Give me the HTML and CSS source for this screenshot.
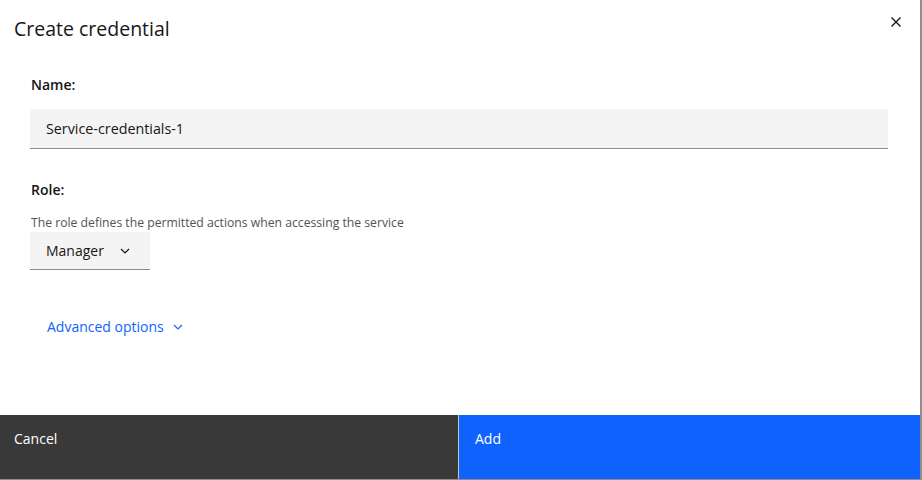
FILE: index.html
```html
<!DOCTYPE html>
<html>
<head>
  <title>Create credential</title>
  <link rel="stylesheet" href="styles.css">
</head>
<body>

  <div class="modal">
    <div class="header">
      <h2>Create credential</h2>
      <button class="close" aria-label="Close">
        <svg width="16" height="16" viewBox="0 0 16 16"><path d="M3.5 3.5 L12.5 12.5 M12.5 3.5 L3.5 12.5" stroke="#161616" stroke-width="1.4" fill="none"/></svg>
      </button>
    </div>

    <div class="content">
      <div class="field">
        <label class="label">Name:</label>
        <input class="text-input" type="text" value="Service-credentials-1">
      </div>

      <div class="field role">
        <label class="label">Role:</label>
        <div class="helper">The role defines the permitted actions when accessing the service</div>
        <div class="dropdown">
          <span>Manager</span>
          <svg width="16" height="16" viewBox="0 0 16 16"><path d="M4 6 L8 10 L12 6" stroke="#161616" stroke-width="1.2" fill="none"/></svg>
        </div>
      </div>

      <a class="advanced" href="#">Advanced options
        <svg width="16" height="16" viewBox="0 0 16 16"><path d="M4 6 L8 10 L12 6" stroke="#0f62fe" stroke-width="1.2" fill="none"/></svg>
      </a>
    </div>

    <div class="footer">
      <button class="btn secondary">Cancel</button>
      <button class="btn primary">Add</button>
    </div>
  </div>

</body>
</html>
```

FILE: styles.css
```css
* { box-sizing: border-box; margin: 0; padding: 0; }

body {
  font-family: "Open Sans", "Liberation Sans", sans-serif;
  background: #8d8d8d;
  color: #161616;
  width: 922px;
  height: 480px;
  overflow: hidden;
}

.modal {
  width: 920px;
  height: 479px;
  background: white;
  display: flex;
  flex-direction: column;
}

.header {
  display: flex;
  justify-content: space-between;
  align-items: flex-start;
  padding: 16px 14px 0 14px;
  height: 62px;
}

h2 {
  font-size: 19.5px;
  font-weight: 400;
  line-height: 26px;
}

.close {
  background: none;
  border: none;
  width: 16px;
  height: 16px;
  margin-top: -2px;
  margin-right: 2px;
  cursor: pointer;
}

.content {
  flex: 1;
  padding: 14px 32px 0 30px;
}

.label {
  display: block;
  font-size: 14px;
  font-weight: 600;
  line-height: 18px;
  padding-left: 1px;
  margin-bottom: 15px;
}

.text-input {
  width: 858px;
  height: 40px;
  border: none;
  border-bottom: 1px solid #8d8d8d;
  background: #f4f4f4;
  padding: 0 16px;
  font-family: inherit;
  font-size: 14.3px;
  color: #161616;
}

.role {
  margin-top: 32px;
}

.role .label {
  margin-bottom: 16px;
}

.helper {
  font-size: 12.2px;
  color: #525252;
  line-height: 15px;
  padding-left: 1px;
  margin-bottom: 2px;
}

.dropdown {
  width: 120px;
  height: 38px;
  background: #f4f4f4;
  border-bottom: 1px solid #8d8d8d;
  display: flex;
  align-items: center;
  justify-content: space-between;
  padding: 0 17px 0 16px;
  font-size: 14px;
}

.advanced {
  display: inline-flex;
  align-items: center;
  gap: 6px;
  margin-top: 47px;
  margin-left: 17px;
  font-size: 14px;
  color: #0f62fe;
  text-decoration: none;
}

.footer {
  display: flex;
  height: 64px;
}

.btn {
  border: none;
  text-align: left;
  padding: 14px 14px;
  font-family: inherit;
  font-size: 14px;
  color: white;
  display: flex;
  align-items: flex-start;
  cursor: pointer;
}

.secondary {
  width: 459px;
  background: #393939;
  border-right: 1px solid #c6c6c6;
}

.primary {
  flex: 1;
  padding-left: 16px;
  background: #0f62fe;
}
```
